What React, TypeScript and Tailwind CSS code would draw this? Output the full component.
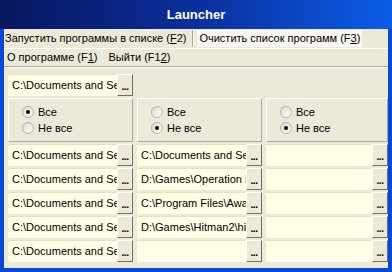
import React from "react";

const font = { fontFamily: '"Liberation Sans", Arial, sans-serif' };

function Dots() {
    return (
        <div className="flex h-[22px] w-[16px] shrink-0 items-end justify-center border-t border-l border-t-white border-l-white border-r border-b border-r-[#716f64] border-b-[#716f64] bg-[#ece9d8] pb-[3px]">
            <span className="text-[10px] font-bold leading-none tracking-[-0.5px] text-black">...</span>
        </div>
    );
}

function PathBox({ text }: { text: string }) {
    return (
        <div className="flex h-[22px] w-full items-stretch">
            <div className="flex min-w-0 flex-1 items-center overflow-hidden whitespace-nowrap border-t border-t-[#e4e0c8] bg-[#ffffe6] pl-[4px] text-[11px] text-black">
                {text}
            </div>
            <Dots />
        </div>
    );
}

function Radio({ on, label }: { on: boolean; label: string }) {
    return (
        <div className="flex h-[16px] items-center gap-[4px]">
            <div className="flex h-[12px] w-[12px] items-center justify-center rounded-full border border-[#b8b4a4] bg-gradient-to-br from-[#dcd9cd] to-white">
                {on ? <div className="h-[4px] w-[4px] rounded-full bg-black" /> : null}
            </div>
            <span className="text-[11px] text-black">{label}</span>
        </div>
    );
}

function Group({ first }: { first: boolean }) {
    return (
        <div className="flex h-[44px] flex-col justify-center border-t border-l border-t-white border-l-white border-r border-b border-r-[#aca899] border-b-[#aca899] bg-[#ece9d8] pl-[13px]">
            <Radio on={first} label="Все" />
            <Radio on={!first} label="Не все" />
        </div>
    );
}

const col1 = ["C:\\Documents and Settings", "C:\\Documents and Settings", "C:\\Documents and Settings", "C:\\Documents and Settings", "C:\\Documents and Settings"];
const col2 = ["C:\\Documents and Settings", "D:\\Games\\Operation Flashpoint", "C:\\Program Files\\Awakening", "D:\\Games\\Hitman2\\hitman2.exe", ""];

export default function App() {
    return (
        <div className="flex h-[272px] w-[392px] flex-col overflow-hidden bg-[#0b46dc]" style={font}>
            <div className="flex h-[29px] shrink-0 items-center justify-center bg-gradient-to-r from-[#08175e] via-[#0a2f9c] to-[#0c5ce8]">
                <span className="text-[13px] font-bold text-white">Launcher</span>
            </div>
            <div className="mx-[4px] mb-[4px] flex flex-1 flex-col bg-[#ece9d8]">
                <div className="flex h-[19px] items-center text-[11px] text-black">
                    <div className="pl-[1px] pr-[6px]">
                        Запустить программы в списке (<u>F</u>2)
                    </div>
                    <div className="h-[17px] w-[2px] border-l border-[#aca899] border-r border-r-white" />
                    <div className="ml-[3px] flex h-[17px] items-center bg-[#f8f7f1] px-[2px]">
                        Очистить список программ (F<u>3</u>)
                    </div>
                </div>
                <div className="flex h-[18px] items-center border-t border-white text-[11px] text-black">
                    <div className="pl-[3px] pr-[11px]">
                        О программе (F<u>1</u>)
                    </div>
                    <div>
                        Выйти (F1<u>2</u>)
                    </div>
                </div>
                <div className="border-t border-[#aca899]" />
                <div className="border-t border-white" />
                <div className="grid grid-cols-[125px_125px_122px] gap-x-[4px] gap-y-[2px] pl-[4px] pt-[6px]">
                    <PathBox text="C:\Documents and Settings" />
                    <div />
                    <div />
                    <Group first={true} />
                    <Group first={false} />
                    <Group first={false} />
                    {col1.map((t, i) => (
                        <React.Fragment key={i}>
                            <PathBox text={t} />
                            <PathBox text={col2[i]} />
                            <PathBox text="" />
                        </React.Fragment>
                    ))}
                </div>
            </div>
        </div>
    );
}
